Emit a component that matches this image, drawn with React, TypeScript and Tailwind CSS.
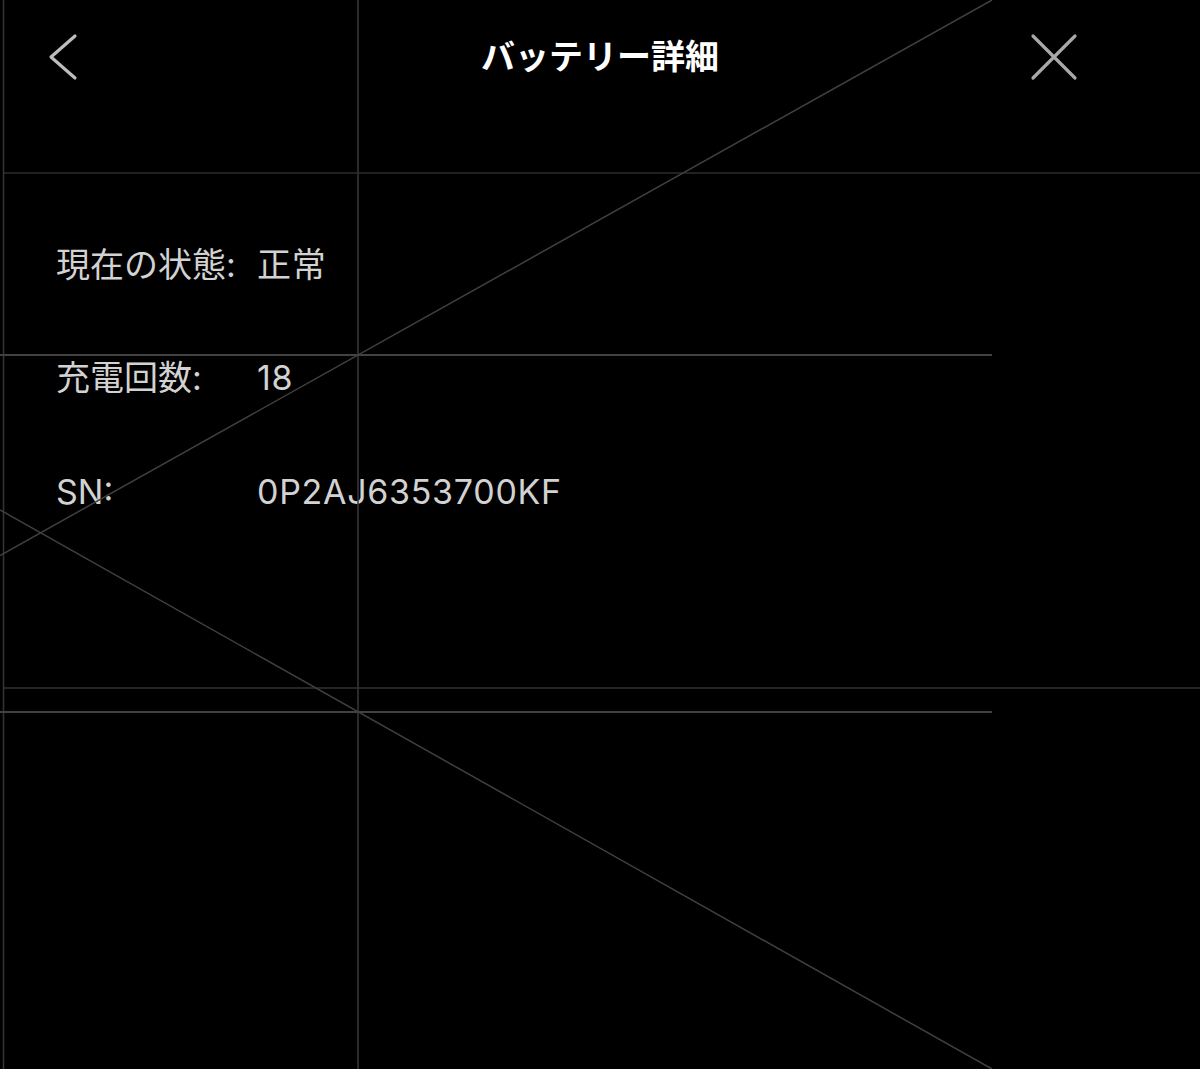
const FONT = {
	fontFamily: '"Inter", "Noto Sans CJK JP", sans-serif',
};

const ROWS = [
	{ label: "現在の状態:", value: "正常" },
	{ label: "充電回数:", value: "18" },
	{ label: "SN:", value: "0P2AJ6353700KF" },
];

function BackIcon() {
	return (
		<svg width="30" height="48" viewBox="0 0 30 48" fill="none">
			<path
				d="M27 3 3 24l24 21"
				stroke="#bdbdbd"
				strokeWidth="3.2"
				strokeLinecap="round"
				strokeLinejoin="round"
			/>
		</svg>
	);
}

function CloseIcon() {
	return (
		<svg width="48" height="48" viewBox="0 0 48 48" fill="none">
			<path
				d="M3 3l42 42M45 3 3 45"
				stroke="#a8a8a8"
				strokeWidth="3.2"
				strokeLinecap="round"
			/>
		</svg>
	);
}

function GuideLines() {
	// wireframe guides laid over the screen
	return (
		<svg
			className="pointer-events-none absolute inset-0"
			width="1200"
			height="1069"
			viewBox="0 0 1200 1069"
		>
			<g strokeWidth="1.5" fill="none">
				<line x1="3.5" y1="0" x2="3.5" y2="1069" stroke="#353535" />
				<line x1="358" y1="0" x2="358" y2="1069" stroke="#383838" />
				<line x1="4" y1="173" x2="1200" y2="173" stroke="#2c2c2c" />
				<line x1="4" y1="688" x2="1200" y2="688" stroke="#323232" />
				<line x1="0" y1="355" x2="992" y2="355" stroke="#424242" strokeWidth="2" />
				<line x1="0" y1="712" x2="992" y2="712" stroke="#424242" strokeWidth="2" />
				<line x1="0" y1="555.5" x2="992" y2="0" stroke="#404040" />
				<line x1="0" y1="510" x2="992" y2="1069" stroke="#404040" />
			</g>
		</svg>
	);
}

export default function App() {
	return (
		<div
			className="relative h-[1069px] w-[1200px] overflow-hidden bg-black"
			style={FONT}
		>
			<header className="grid h-[114px] grid-cols-[1fr_auto_1fr] items-center px-[48px]">
				<div className="flex">
					<BackIcon />
				</div>
				<h1 className="text-[34px] font-semibold leading-10 text-white">
					バッテリー詳細
				</h1>
				<div className="flex justify-end pr-[74px]">
					<CloseIcon />
				</div>
			</header>

			<div className="flex flex-col pl-[56px] pt-[94px]">
				{ROWS.map((row) => (
					<div
						key={row.label}
						className="flex h-[113.5px] items-center text-[34px] leading-10 text-[#d2d2d2]"
					>
						<span className="w-[201px] shrink-0">{row.label}</span>
						<span className="tracking-[0.7px]">{row.value}</span>
					</div>
				))}
			</div>

			<GuideLines />
		</div>
	);
}
